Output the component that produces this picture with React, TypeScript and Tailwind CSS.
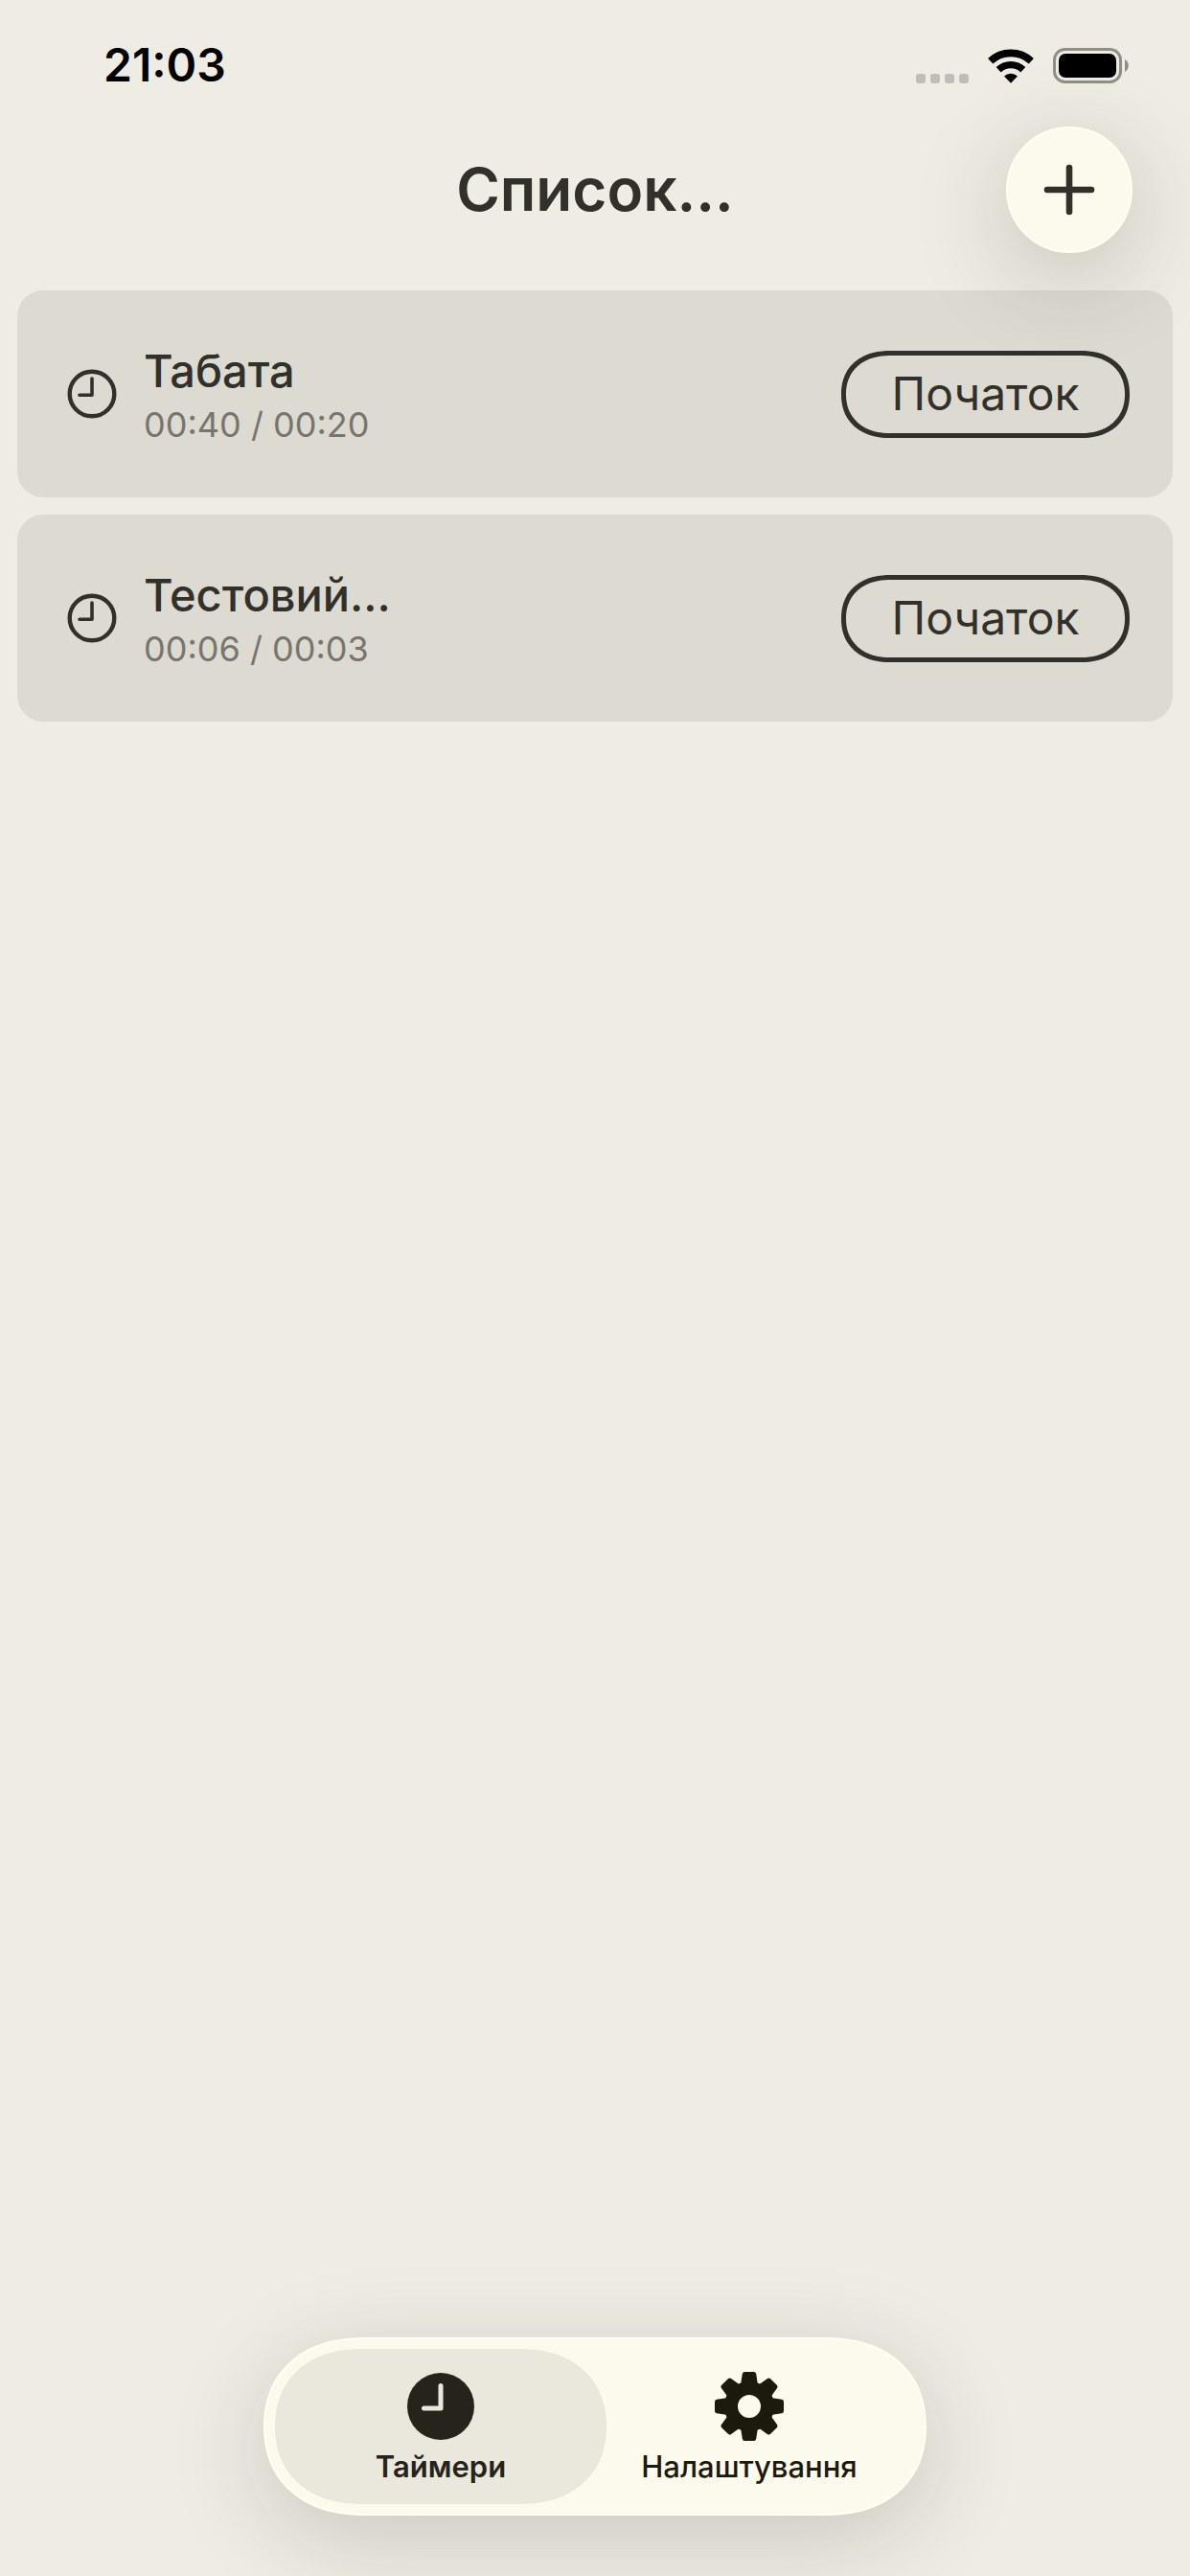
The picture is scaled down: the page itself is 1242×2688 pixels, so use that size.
import React, { useState } from 'react';

const TIMERS = [
  { id: 1, name: 'Табата', work: '00:40', rest: '00:20' },
  { id: 2, name: 'Тестовий...', work: '00:06', rest: '00:03' },
];

const TEETH = [0, 45, 90, 135, 180, 225, 270, 315];

function ClockIcon() {
  return (
    <svg viewBox="0 0 52 52" className="size-13 shrink-0" fill="none" stroke="currentColor" aria-hidden="true">
      <circle cx="26" cy="26" r="23.3" strokeWidth="4.4" />
      <path d="M26 10v17.2H13" strokeWidth="3.6" strokeLinecap="round" strokeLinejoin="round" />
    </svg>
  );
}

function ClockFilledIcon() {
  return (
    <svg viewBox="0 0 72 72" className="size-18" fill="none" aria-hidden="true">
      <circle cx="36" cy="36" r="35" fill="currentColor" />
      <path d="M36 14.5V38H18.5" stroke="#eae8dc" strokeWidth="5" strokeLinecap="round" strokeLinejoin="round" />
    </svg>
  );
}

function GearIcon() {
  return (
    <svg viewBox="-36 -36 72 72" className="size-18" fill="currentColor" aria-hidden="true">
      <circle r="19" fill="none" stroke="currentColor" strokeWidth="14" />
      {TEETH.map((angle) => (
        <path
          key={angle}
          d="M-4.7-33.5H4.7L6.5-22H-6.5Z"
          transform={`rotate(${angle})`}
          stroke="currentColor"
          strokeWidth="5"
          strokeLinejoin="round"
        />
      ))}
    </svg>
  );
}

function StatusBar() {
  return (
    <div className="flex h-[132px] items-center justify-between pt-1 pr-16 pl-[108px] text-black">
      <time className="text-5xl font-semibold">21:03</time>
      <div className="flex items-end gap-5" aria-hidden="true">
        <div className="flex gap-[5px]">
          {[0, 1, 2, 3].map((dot) => (
            <span key={dot} className="size-[10px] rounded-[3px] bg-[#bfbdb5]" />
          ))}
        </div>
        <svg viewBox="0 0 48 36" className="h-9 w-12" fill="none" stroke="currentColor">
          <path d="M2.7 12.7A31.2 31.2 0 0 1 45.3 12.7" strokeWidth="7.7" />
          <path d="M11.2 21.7A18.8 18.8 0 0 1 36.8 21.7" strokeWidth="7.4" />
          <path d="M24 35.8L17 28.5A10.2 10.2 0 0 1 31 28.5Z" fill="currentColor" stroke="none" />
        </svg>
        <svg viewBox="0 0 79 37" className="h-[37px] w-[79px]">
          <rect x="1.5" y="1.5" width="69" height="34" rx="11" fill="none" stroke="#8f8e88" strokeWidth="3" />
          <rect x="6" y="6" width="60" height="25" rx="7" fill="#000" />
          <path d="M75 12c5 2.5 5 10.5 0 13Z" fill="#8f8e88" />
        </svg>
      </div>
    </div>
  );
}

function TimerRow({ name, work, rest }: { name: string; work: string; rest: string }) {
  return (
    <li className="flex h-[216px] items-center rounded-[27px] bg-[#dddad2] pr-[45px] pl-[52px]">
      <ClockIcon />
      <div className="ml-7 min-w-0 flex-1">
        <h2 className="truncate text-[47px] leading-[64px] font-medium">{name}</h2>
        <p className="text-4xl leading-[48px] text-[#77756e]">
          {work} / {rest}
        </p>
      </div>
      <button
        type="button"
        className="h-[91px] w-[301px] rounded-[51px/45px] border-[5px] border-[#32302b] text-5xl [corner-shape:superellipse(1.15)]"
      >
        Початок
      </button>
    </li>
  );
}

const TABS = [
  { id: 'timers', label: 'Таймери', icon: <ClockFilledIcon /> },
  { id: 'settings', label: 'Налаштування', icon: <GearIcon /> },
];

export default function App() {
  const [tab, setTab] = useState('timers');

  return (
    <div className="flex min-h-screen flex-col overflow-hidden bg-[#efece4] font-['Inter','Liberation_Sans',sans-serif] text-[#32302b]">
      <StatusBar />

      <header className="relative z-10 grid grid-cols-[132px_1fr_132px] items-center px-[60px]">
        <h1 className="col-start-2 text-center text-[62px] leading-[80px] font-semibold">Список...</h1>
        <button
          type="button"
          aria-label="Додати таймер"
          className="flex size-[132px] items-center justify-center rounded-full border-2 border-[#fffef1] bg-[#fcfaed] shadow-[0_24px_100px_rgba(40,40,20,0.22)]"
        >
          <svg viewBox="0 0 54 54" className="size-[54px]" stroke="currentColor" strokeWidth="6.6" strokeLinecap="round" aria-hidden="true">
            <path d="M27 4v46M4 27h46" />
          </svg>
        </button>
      </header>

      <main className="flex-1 px-[18px] pt-[39px]">
        <ul className="flex flex-col gap-[18px]">
          {TIMERS.map((timer) => (
            <TimerRow key={timer.id} name={timer.name} work={timer.work} rest={timer.rest} />
          ))}
        </ul>
      </main>

      <nav className="flex justify-center pb-[63px]">
        <div className="flex rounded-[105px/93px] border-2 border-[#fffef1] bg-[#fcfaed] p-[10px] shadow-[0_24px_100px_rgba(40,40,20,0.18)] [corner-shape:superellipse(1.15)]">
          {TABS.map(({ id, label, icon }) => (
            <button
              key={id}
              type="button"
              aria-current={tab === id ? 'page' : undefined}
              onClick={() => setTab(id)}
              className={`flex h-[162px] w-[346px] flex-col items-center gap-2 rounded-[91px/81px] pt-6 text-[31px] leading-[38px] [corner-shape:superellipse(1.15)] not-first:-ml-6 ${
                tab === id ? 'bg-[#eae8dc] font-semibold text-[#26231a]' : 'font-medium text-[#1c190d]'
              }`}
            >
              {icon}
              {label}
            </button>
          ))}
        </div>
      </nav>
    </div>
  );
}
